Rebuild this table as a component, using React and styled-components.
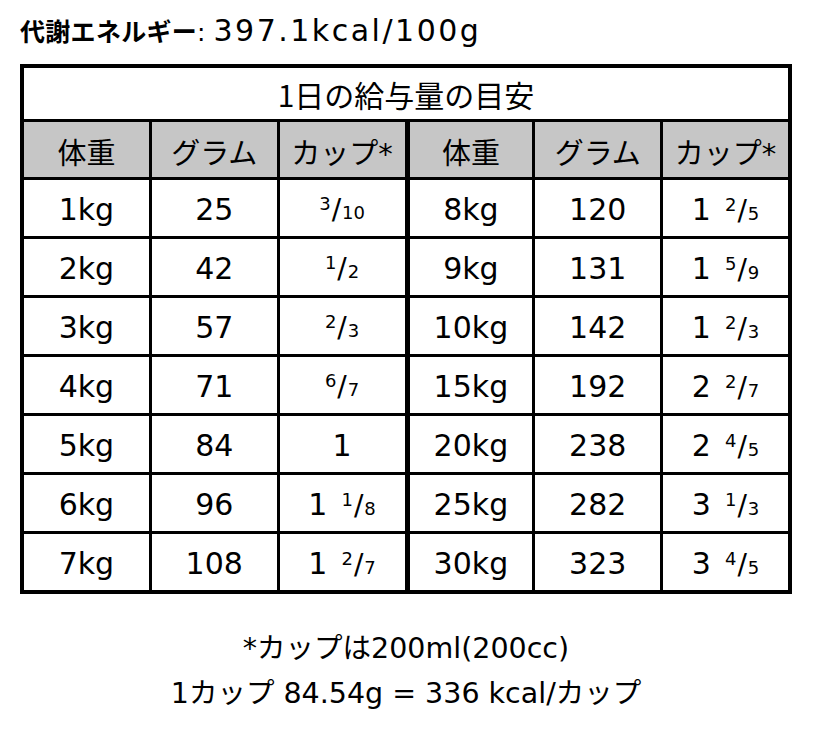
import React from "react";
import styled, { createGlobalStyle } from "styled-components";

const GlobalStyle = createGlobalStyle`
  html, body {
    margin: 0;
    padding: 0;
    background: #fff;
  }
  body {
    font-family: "DejaVu Sans", "Noto Sans CJK JP", sans-serif;
    color: #000;
  }
`;

const Page = styled.div`
  width: 820px;
  padding: 10px 28px 0 20px;
  box-sizing: border-box;
`;

const Energy = styled.div`
  height: 40px;
  line-height: 40px;
  white-space: nowrap;
  font-size: 25px;
`;

const EnergyLabel = styled.span`
  font-family: "Noto Sans CJK JP", sans-serif;
  font-weight: 700;
  letter-spacing: 0.3px;
`;

const EnergyValue = styled.span`
  font-size: 30px;
  letter-spacing: 2.5px;
`;

const Board = styled.div`
  margin-top: 14px;
  display: grid;
  grid-template-columns: repeat(6, 1fr);
  grid-template-rows: 51px 55px repeat(7, 56px);
  gap: 3px;
  padding: 4px;
  background: #000;
`;

const Caption = styled.div`
  grid-column: 1 / -1;
  background: #fff;
  display: flex;
  align-items: center;
  justify-content: center;
  font-size: 30px;
  font-family: "Noto Sans CJK JP", sans-serif;
`;

const Cell = styled.div`
  background: ${(p) => (p.$head ? "#c6c6c6" : "#fff")};
  margin-left: ${(p) => (p.$split ? "2px" : "0")};
  display: flex;
  align-items: center;
  justify-content: center;
  font-size: ${(p) => (p.$head ? "29px" : "30px")};
  white-space: nowrap;
  padding-top: 2px;
`;

const Frac = styled.span`
  display: inline-flex;
  align-items: baseline;
`;

const Whole = styled.span`
  margin-right: 14px;
`;

const Num = styled.span`
  font-size: 18px;
  position: relative;
  top: -9px;
`;

const Slash = styled.span`
  font-size: 28px;
  margin: 0 1px;
`;

const Den = styled.span`
  font-size: 18px;
`;

const Notes = styled.div`
  margin-top: 32px;
  text-align: center;
  font-size: 28.5px;
  line-height: 45px;
`;

const left = [
  ["1kg", "25", { n: 3, d: 10 }],
  ["2kg", "42", { n: 1, d: 2 }],
  ["3kg", "57", { n: 2, d: 3 }],
  ["4kg", "71", { n: 6, d: 7 }],
  ["5kg", "84", { w: 1 }],
  ["6kg", "96", { w: 1, n: 1, d: 8 }],
  ["7kg", "108", { w: 1, n: 2, d: 7 }],
];

const right = [
  ["8kg", "120", { w: 1, n: 2, d: 5 }],
  ["9kg", "131", { w: 1, n: 5, d: 9 }],
  ["10kg", "142", { w: 1, n: 2, d: 3 }],
  ["15kg", "192", { w: 2, n: 2, d: 7 }],
  ["20kg", "238", { w: 2, n: 4, d: 5 }],
  ["25kg", "282", { w: 3, n: 1, d: 3 }],
  ["30kg", "323", { w: 3, n: 4, d: 5 }],
];

const Cup = ({ w, n, d }) => {
  if (!n) return <span>{w}</span>;
  return (
    <Frac>
      {w ? <Whole>{w}</Whole> : null}
      <Num>{n}</Num>
      <Slash>/</Slash>
      <Den>{d}</Den>
    </Frac>
  );
};

const heads = ["体重", "グラム", "カップ*"];

export default function App() {
  return (
    <Page>
      <GlobalStyle />
      <Energy>
        <EnergyLabel>代謝エネルギー</EnergyLabel>: <EnergyValue>397.1kcal/100g</EnergyValue>
      </Energy>
      <Board>
        <Caption>1日の給与量の目安</Caption>
        {[...heads, ...heads].map((h, i) => (
          <Cell key={"h" + i} $head $split={i === 3}>
            {h}
          </Cell>
        ))}
        {left.map((row, r) => {
          const other = right[r];
          return (
            <React.Fragment key={r}>
              <Cell>{row[0]}</Cell>
              <Cell>{row[1]}</Cell>
              <Cell>
                <Cup {...row[2]} />
              </Cell>
              <Cell $split>{other[0]}</Cell>
              <Cell>{other[1]}</Cell>
              <Cell>
                <Cup {...other[2]} />
              </Cell>
            </React.Fragment>
          );
        })}
      </Board>
      <Notes>
        <div>*カップは200ml(200cc)</div>
        <div>1カップ 84.54g = 336 kcal/カップ</div>
      </Notes>
    </Page>
  );
}
